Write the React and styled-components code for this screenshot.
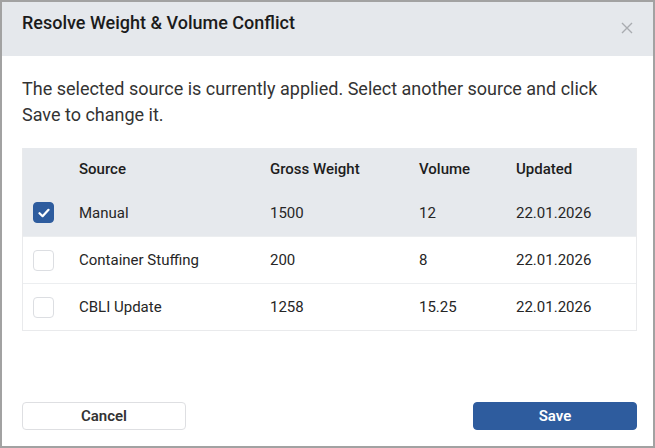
import React, { useState } from "react";
import styled, { createGlobalStyle } from "styled-components";

const Global = createGlobalStyle`
  html, body { margin: 0; padding: 0; background: #fff; }
  body { font-family: Roboto, "Noto Sans", sans-serif; color: #222; }
  * { box-sizing: border-box; }
`;

const Dialog = styled.div`
  width: 655px;
  height: 448px;
  border: 2px solid #a2a2a2;
  background: #fff;
  display: flex;
  flex-direction: column;
`;

const Header = styled.div`
  height: 54px;
  background: #e5e8ec;
  display: flex;
  align-items: flex-start;
  justify-content: space-between;
  padding: 10px 18px 0 20px;
`;

const Title = styled.h2`
  margin: 0;
  font-size: 18px;
  font-weight: 500;
  line-height: 22px;
  color: #1b1b1b;
`;

const Close = styled.button`
  border: 0;
  background: none;
  padding: 0;
  margin-top: 10px;
  width: 14px;
  height: 14px;
  color: #a9acb0;
  display: flex;
  cursor: pointer;
`;

const Body = styled.div`
  flex: 1;
  padding: 20px 16px 0 20px;
  display: flex;
  flex-direction: column;
`;

const Message = styled.p`
  margin: 0 0 20px;
  font-size: 18px;
  line-height: 26px;
  color: #333;
`;

const Table = styled.div`
  border: 1px solid #e9eaec;
  border-top: 0;
  display: flex;
  flex-direction: column;
`;

const Row = styled.div`
  display: grid;
  grid-template-columns: 56px 191px 149px 97px 1fr;
  align-items: center;
  height: ${(p) => (p.$head ? 41 : 47)}px;
  background: ${(p) => (p.$head || p.$selected ? "#e6e9ed" : "#fff")};
  border-top: ${(p) => (p.$head || p.$first ? "0" : "1px solid #eceef0")};
  font-size: 15px;
  font-weight: ${(p) => (p.$head ? 500 : 400)};
  color: ${(p) => (p.$head ? "#1d1d1d" : "#262626")};
`;

const Cell = styled.div`
  white-space: nowrap;
`;

const CheckCell = styled.div`
  padding-left: 10px;
  display: flex;
  align-items: center;
`;

const Box = styled.span`
  width: 21px;
  height: 21px;
  border-radius: 4px;
  border: 1px solid ${(p) => (p.$checked ? "#2e5c9e" : "#dcdee2")};
  background: ${(p) => (p.$checked ? "#2e5c9e" : "#fff")};
  display: flex;
  align-items: center;
  justify-content: center;
  cursor: pointer;
`;

const Footer = styled.div`
  display: flex;
  justify-content: space-between;
  padding: 0 16px 16px 20px;
`;

const Button = styled.button`
  width: 164px;
  height: 28px;
  border-radius: 4px;
  font-family: Roboto, "Noto Sans", sans-serif;
  font-size: 15px;
  font-weight: 600;
  cursor: pointer;
  border: 1px solid ${(p) => (p.$primary ? "#2e5c9e" : "#dedfe2")};
  background: ${(p) => (p.$primary ? "#2e5c9e" : "#fff")};
  color: ${(p) => (p.$primary ? "#fff" : "#333")};
`;

const rows = [
  { source: "Manual", weight: "1500", volume: "12", updated: "22.01.2026" },
  { source: "Container Stuffing", weight: "200", volume: "8", updated: "22.01.2026" },
  { source: "CBLI Update", weight: "1258", volume: "15.25", updated: "22.01.2026" },
];

export default function App() {
  const [selected, setSelected] = useState(0);
  return (
    <>
      <Global />
      <Dialog>
        <Header>
          <Title>Resolve Weight &amp; Volume Conflict</Title>
          <Close aria-label="Close">
            <svg width="12" height="12" viewBox="0 0 12 12">
              <path d="M1 1L11 11M11 1L1 11" stroke="currentColor" strokeWidth="1.4" />
            </svg>
          </Close>
        </Header>
        <Body>
          <Message>
            The selected source is currently applied. Select another source and click Save to change it.
          </Message>
          <Table>
            <Row $head>
              <Cell />
              <Cell>Source</Cell>
              <Cell>Gross Weight</Cell>
              <Cell>Volume</Cell>
              <Cell>Updated</Cell>
            </Row>
            {rows.map((r, i) => (
              <Row key={r.source} $selected={selected === i} $first={i === 0}>
                <CheckCell>
                  <Box $checked={selected === i} onClick={() => setSelected(i)}>
                    {selected === i && (
                      <svg width="12" height="10" viewBox="0 0 12 10">
                        <path d="M1.5 5.2L4.6 8.2L10.5 1.8" fill="none" stroke="#fff" strokeWidth="2.2" strokeLinecap="round" strokeLinejoin="round" />
                      </svg>
                    )}
                  </Box>
                </CheckCell>
                <Cell>{r.source}</Cell>
                <Cell>{r.weight}</Cell>
                <Cell>{r.volume}</Cell>
                <Cell>{r.updated}</Cell>
              </Row>
            ))}
          </Table>
        </Body>
        <Footer>
          <Button>Cancel</Button>
          <Button $primary>Save</Button>
        </Footer>
      </Dialog>
    </>
  );
}
